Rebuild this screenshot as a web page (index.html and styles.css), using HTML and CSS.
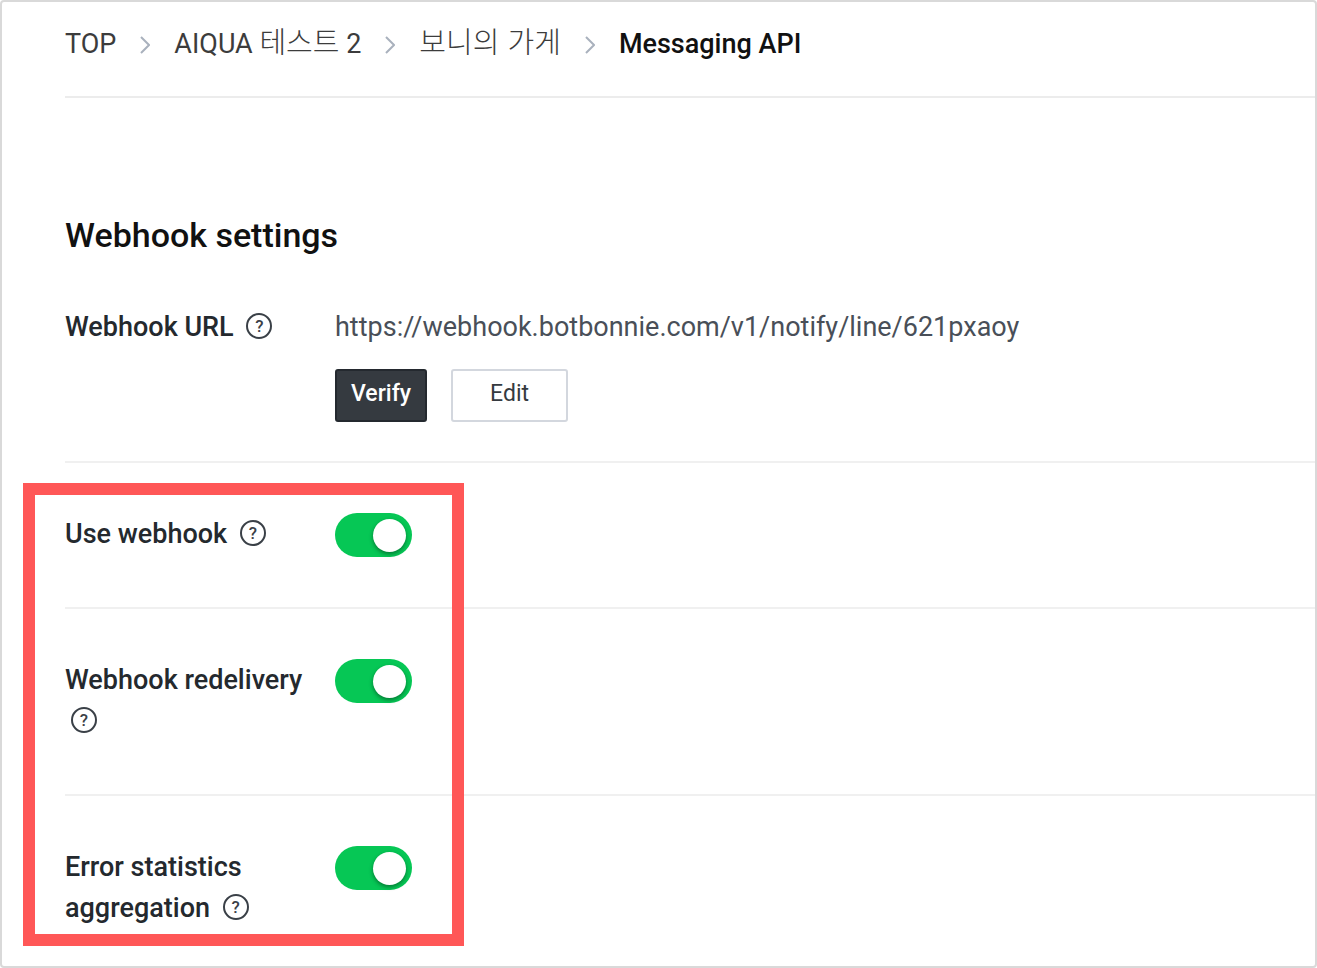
FILE: index.html
```
<!DOCTYPE html>
<html lang="en">
<head>
    <meta charset="UTF-8">
    <meta name="viewport" content="width=device-width, initial-scale=1.0">
    <title>Messaging API</title>
    <link rel="stylesheet" href="styles.css">
</head>
<body>
    <div class="page">
        <nav class="breadcrumb" aria-label="Breadcrumb">
            <a href="#">TOP</a>
            <svg class="chevron" viewBox="0 0 10 18"><path d="M1 1l8 8-8 8"/></svg>
            <a href="#">AIQUA <span class="ko" lang="ko">테스트</span> 2</a>
            <svg class="chevron" viewBox="0 0 10 18"><path d="M1 1l8 8-8 8"/></svg>
            <a href="#"><span class="ko" lang="ko">보니의 가게</span></a>
            <svg class="chevron" viewBox="0 0 10 18"><path d="M1 1l8 8-8 8"/></svg>
            <span class="current">Messaging API</span>
        </nav>

        <main>
            <h1>Webhook settings</h1>

            <div class="row url-row">
                <div class="row-label">
                    Webhook URL <button type="button" class="help">?</button>
                </div>
                <div class="row-value">
                    <p class="url">https://webhook.botbonnie.com/v1/notify/line/621pxaoy</p>
                    <div class="buttons">
                        <button type="button" class="btn btn-dark">Verify</button>
                        <button type="button" class="btn btn-light">Edit</button>
                    </div>
                </div>
            </div>

            <div class="toggles">
                <div class="row">
                    <div class="row-label">
                        <label for="useWebhook">Use webhook</label> <button type="button" class="help">?</button>
                    </div>
                    <input type="checkbox" class="switch" id="useWebhook" checked>
                </div>
                <div class="row">
                    <div class="row-label">
                        <label for="redelivery">Webhook redelivery</label> <button type="button" class="help">?</button>
                    </div>
                    <input type="checkbox" class="switch" id="redelivery" checked>
                </div>
                <div class="row last">
                    <div class="row-label">
                        <label for="errorStats">Error statistics aggregation</label> <button type="button" class="help">?</button>
                    </div>
                    <input type="checkbox" class="switch" id="errorStats" checked>
                </div>
                <div class="highlight"></div>
            </div>
        </main>
    </div>
</body>
</html>
```

FILE: styles.css
```
* {
    box-sizing: border-box;
}
body {
    margin: 0;
    font-family: Roboto, "Noto Sans CJK KR", sans-serif;
    font-size: 27px;
    line-height: 41px;
    color: #24292e;
    background-color: #fff;
}
.page {
    min-height: 100vh;
    padding-left: 63px;
    border: 2px solid #d9d9d9;
    border-radius: 4px;
    overflow: hidden;
}

/* Breadcrumb */
.breadcrumb {
    display: flex;
    align-items: center;
    gap: 24px;
    padding: 22px 0 31px;
    border-bottom: 2px solid #ececec;
}
.breadcrumb a {
    color: #3c3c3c;
    text-decoration: none;
}
.ko {
    font-family: "Noto Sans CJK KR", sans-serif;
    font-size: 29px;
    font-weight: 300;
    line-height: 1;
}
.current {
    font-weight: 500;
    color: #111;
}
.chevron {
    width: 10px;
    height: 18px;
    fill: none;
    stroke: #a9b1bd;
    stroke-width: 2;
}

/* Settings rows */
h1 {
    margin: 0;
    padding-top: 117px;
    font-size: 34px;
    font-weight: 500;
    color: #111;
}
.row {
    display: grid;
    grid-template-columns: 246px 1fr;
    column-gap: 24px;
    align-items: start;
    padding: 50px 0 49px;
    border-bottom: 2px solid #f0f0f0;
}
.url-row {
    padding: 50px 0 39px;
}
.row-label {
    padding: 1px 0 3px;
    font-weight: 500;
}
.help {
    width: 26px;
    height: 26px;
    margin: 0 0 0 6px;
    padding: 0;
    border: 2px solid #3a4047;
    border-radius: 50%;
    background: none;
    font-family: inherit;
    font-size: 17px;
    font-weight: 500;
    line-height: 22px;
    color: #3a4047;
    vertical-align: 4px;
}
.url {
    margin: 0;
    padding-top: 1px;
    color: #494f58;
}
.buttons {
    display: flex;
    gap: 24px;
    margin-top: 21px;
}
.btn {
    height: 53px;
    padding: 0 14px 4px;
    border: 2px solid #d3d7de;
    border-radius: 3px;
    font-family: inherit;
    font-size: 23px;
}
.btn-dark {
    border-color: #24292f;
    background-color: #353a40;
    font-weight: 500;
    color: #fff;
}
.btn-light {
    padding: 0 37px 4px;
    background-color: #fff;
    color: #353a40;
}

/* Toggles */
.toggles {
    position: relative;
}
.last {
    padding-bottom: 24px;
    border-bottom: none;
}
.switch {
    appearance: none;
    display: flex;
    align-items: center;
    width: 77px;
    height: 44px;
    margin: 0;
    padding: 0 6px;
    border-radius: 22px;
    background-color: #ccc;
}
.switch::before {
    content: "";
    width: 33px;
    height: 33px;
    border-radius: 50%;
    background-color: #fff;
    box-shadow: 0 2px 4px rgba(0, 0, 0, 0.4);
}
.switch:checked {
    justify-content: flex-end;
    background-color: #06c755;
}
.highlight {
    position: absolute;
    top: 20px;
    left: -42px;
    width: 441px;
    height: 463px;
    border: 12px solid #ff5757;
    pointer-events: none;
}
```
